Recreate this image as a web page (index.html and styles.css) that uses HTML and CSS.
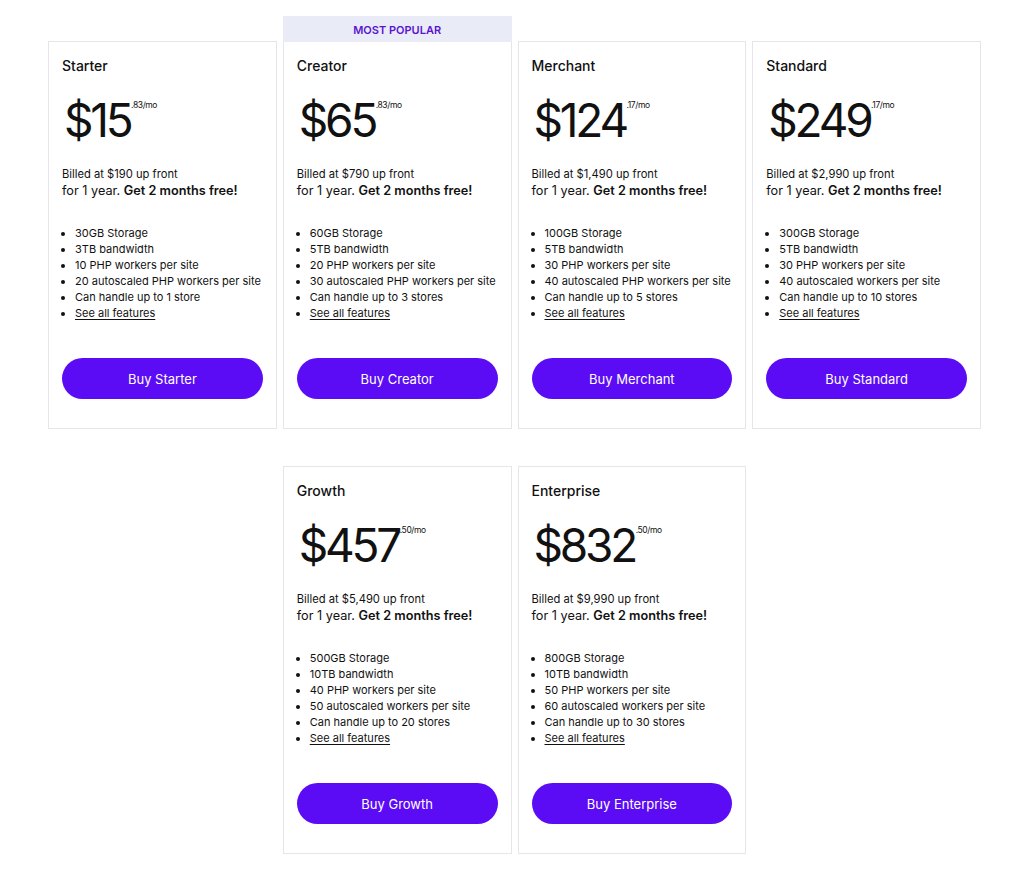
FILE: index.html
```html
<!DOCTYPE html>
<html lang="en">
<head>
<meta charset="utf-8">
<title>Plans</title>
<link rel="stylesheet" href="styles.css">
</head>
<body>
<main class="plans">
  <section class="card">
    <h2 class="name">Starter</h2>
    <div class="price"><span class="amount">$15</span><span class="cents">.83/mo</span></div>
    <p class="billed">Billed at $190 up front</p>
    <p class="year">for 1 year. <strong>Get 2 months free!</strong></p>
    <ul class="features">
      <li>30GB Storage</li>
      <li>3TB bandwidth</li>
      <li>10 PHP workers per site</li>
      <li>20 autoscaled PHP workers per site</li>
      <li>Can handle up to 1 store</li>
      <li><a href="#">See all features</a></li>
    </ul>
    <button class="buy">Buy Starter</button>
  </section>
  <section class="card">
    <div class="badge">MOST POPULAR</div>
    <h2 class="name">Creator</h2>
    <div class="price"><span class="amount">$65</span><span class="cents">.83/mo</span></div>
    <p class="billed">Billed at $790 up front</p>
    <p class="year">for 1 year. <strong>Get 2 months free!</strong></p>
    <ul class="features">
      <li>60GB Storage</li>
      <li>5TB bandwidth</li>
      <li>20 PHP workers per site</li>
      <li>30 autoscaled PHP workers per site</li>
      <li>Can handle up to 3 stores</li>
      <li><a href="#">See all features</a></li>
    </ul>
    <button class="buy">Buy Creator</button>
  </section>
  <section class="card">
    <h2 class="name">Merchant</h2>
    <div class="price"><span class="amount">$124</span><span class="cents">.17/mo</span></div>
    <p class="billed">Billed at $1,490 up front</p>
    <p class="year">for 1 year. <strong>Get 2 months free!</strong></p>
    <ul class="features">
      <li>100GB Storage</li>
      <li>5TB bandwidth</li>
      <li>30 PHP workers per site</li>
      <li>40 autoscaled PHP workers per site</li>
      <li>Can handle up to 5 stores</li>
      <li><a href="#">See all features</a></li>
    </ul>
    <button class="buy">Buy Merchant</button>
  </section>
  <section class="card">
    <h2 class="name">Standard</h2>
    <div class="price"><span class="amount">$249</span><span class="cents">.17/mo</span></div>
    <p class="billed">Billed at $2,990 up front</p>
    <p class="year">for 1 year. <strong>Get 2 months free!</strong></p>
    <ul class="features">
      <li>300GB Storage</li>
      <li>5TB bandwidth</li>
      <li>30 PHP workers per site</li>
      <li>40 autoscaled workers per site</li>
      <li>Can handle up to 10 stores</li>
      <li><a href="#">See all features</a></li>
    </ul>
    <button class="buy">Buy Standard</button>
  </section>
  <section class="card">
    <h2 class="name">Growth</h2>
    <div class="price"><span class="amount">$457</span><span class="cents">.50/mo</span></div>
    <p class="billed">Billed at $5,490 up front</p>
    <p class="year">for 1 year. <strong>Get 2 months free!</strong></p>
    <ul class="features">
      <li>500GB Storage</li>
      <li>10TB bandwidth</li>
      <li>40 PHP workers per site</li>
      <li>50 autoscaled workers per site</li>
      <li>Can handle up to 20 stores</li>
      <li><a href="#">See all features</a></li>
    </ul>
    <button class="buy">Buy Growth</button>
  </section>
  <section class="card">
    <h2 class="name">Enterprise</h2>
    <div class="price"><span class="amount">$832</span><span class="cents">.50/mo</span></div>
    <p class="billed">Billed at $9,990 up front</p>
    <p class="year">for 1 year. <strong>Get 2 months free!</strong></p>
    <ul class="features">
      <li>800GB Storage</li>
      <li>10TB bandwidth</li>
      <li>50 PHP workers per site</li>
      <li>60 autoscaled workers per site</li>
      <li>Can handle up to 30 stores</li>
      <li><a href="#">See all features</a></li>
    </ul>
    <button class="buy">Buy Enterprise</button>
  </section>
</main>
</body>
</html>
```
FILE: styles.css
```css
* { box-sizing: border-box; }
html, body { margin: 0; background: #fff; }
body {
  font-family: Inter, "Noto Sans", "Liberation Sans", sans-serif;
  color: #111;
}
.plans {
  width: 933px;
  margin: 0 0 0 48px;
  padding-top: 41px;
  display: flex;
  flex-wrap: wrap;
  justify-content: center;
  column-gap: 6px;
  row-gap: 37px;
}
.card {
  position: relative;
  width: 228.75px;
  border: 1px solid #e6e6ea;
  padding: 14px 13px 29px;
  display: flex;
  flex-direction: column;
}
.badge {
  position: absolute;
  left: -1px;
  right: -1px;
  top: -26px;
  height: 26px;
  background: #e9ebf7;
  color: #5a14d0;
  font-size: 11px;
  font-weight: 600;
  text-align: center;
  line-height: 29px;
}
.name {
  margin: 0;
  font-size: 14px;
  line-height: 20px;
  font-weight: 500;
}
.price {
  margin-top: 20px;
  display: flex;
  align-items: flex-start;
  padding-left: 2px;
}
.amount {
  font-size: 46px;
  line-height: 48px;
  letter-spacing: -3.2px;
  font-weight: 400;
}
.cents {
  font-size: 8.5px;
  letter-spacing: -0.4px;
  line-height: 10px;
  margin-top: 4px;
  margin-left: 0.5px;
}
.billed {
  margin: 22px 0 0;
  font-size: 11.2px;
  line-height: 16px;
}
.year {
  margin: 0;
  font-size: 12.7px;
  line-height: 18px;
}
.year strong { font-weight: 600; }
.features {
  margin: 25px 0 0;
  padding-left: 13px;
  font-size: 11px;
  line-height: 16px;
}
.features a { color: #111; text-decoration: underline; text-underline-offset: 2px; }
.buy {
  margin-top: 37px;
  height: 41px;
  width: 100%;
  border: 0;
  border-radius: 21px;
  background: #5b0cf5;
  color: #fff;
  font-family: inherit;
  font-size: 13px;
}
```
